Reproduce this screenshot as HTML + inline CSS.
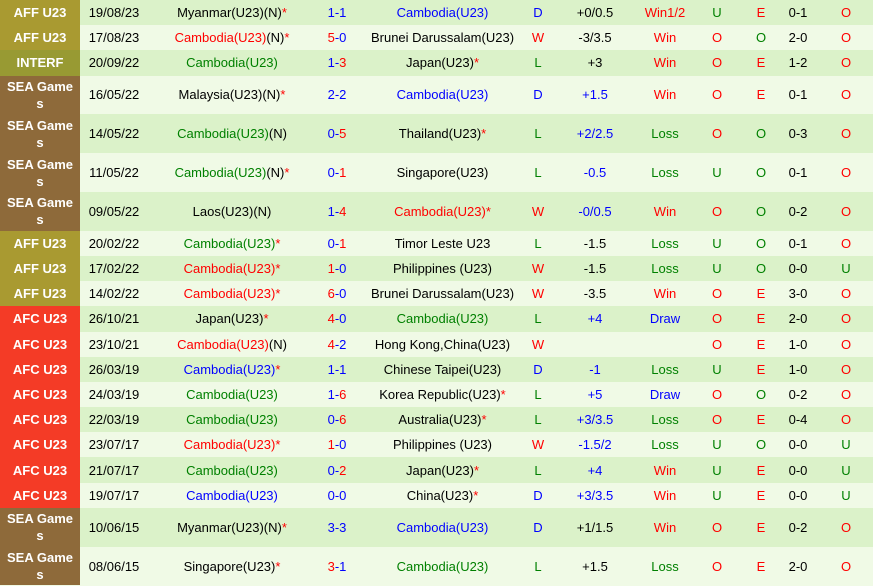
<!DOCTYPE html>
<html><head><meta charset="utf-8"><style>
*{margin:0;padding:0;box-sizing:border-box}
body{width:873px;height:586px;overflow:hidden;background:#f0fae6;font-family:"Liberation Sans",Arial,sans-serif;font-size:13px;color:#000}
.r{display:flex;height:25.2px;align-items:center}
.r.t{height:38.8px}
.r:nth-child(odd){background:#dbf2c9}
.r:nth-child(even){background:#f0fae6}
.r>div{text-align:center;white-space:nowrap;overflow:visible}
.l{width:80px;height:100%;display:flex;align-items:center;justify-content:center;color:#fff;font-weight:bold;line-height:17px;text-align:center}
.aff{background:#a99a31}.int{background:#989a33}.sea{background:#8e6a3a}.afc{background:#f43b26}
.c1{width:68px}.c2{width:168px}.c3{width:42px}.c4{width:169px}.c5{width:22px}.c6{width:92px}.c7{width:48px}.c8{width:56px}.c9{width:32px}.c10{width:42px}.c11{width:54px}
.R{color:#f00}.G{color:#008000}.B{color:#00f}
</style></head><body>
<div class="r"><div class="l aff">AFF U23</div><div class="c1">19/08/23</div><div class="c2">Myanmar(U23)(N)<span class="R">*</span></div><div class="c3 B">1-1</div><div class="c4 B">Cambodia(U23)</div><div class="c5 B">D</div><div class="c6">+0/0.5</div><div class="c7 R">Win1/2</div><div class="c8 G">U</div><div class="c9 R">E</div><div class="c10">0-1</div><div class="c11 R">O</div></div>
<div class="r"><div class="l aff">AFF U23</div><div class="c1">17/08/23</div><div class="c2"><span class="R">Cambodia(U23)</span>(N)<span class="R">*</span></div><div class="c3"><span class="R">5</span><span class="B">-0</span></div><div class="c4">Brunei Darussalam(U23)</div><div class="c5 R">W</div><div class="c6">-3/3.5</div><div class="c7 R">Win</div><div class="c8 R">O</div><div class="c9 G">O</div><div class="c10">2-0</div><div class="c11 R">O</div></div>
<div class="r"><div class="l int">INTERF</div><div class="c1">20/09/22</div><div class="c2 G">Cambodia(U23)</div><div class="c3"><span class="B">1-</span><span class="R">3</span></div><div class="c4">Japan(U23)<span class="R">*</span></div><div class="c5 G">L</div><div class="c6">+3</div><div class="c7 R">Win</div><div class="c8 R">O</div><div class="c9 R">E</div><div class="c10">1-2</div><div class="c11 R">O</div></div>
<div class="r t"><div class="l sea">SEA Game<br>s</div><div class="c1">16/05/22</div><div class="c2">Malaysia(U23)(N)<span class="R">*</span></div><div class="c3 B">2-2</div><div class="c4 B">Cambodia(U23)</div><div class="c5 B">D</div><div class="c6 B">+1.5</div><div class="c7 R">Win</div><div class="c8 R">O</div><div class="c9 R">E</div><div class="c10">0-1</div><div class="c11 R">O</div></div>
<div class="r t"><div class="l sea">SEA Game<br>s</div><div class="c1">14/05/22</div><div class="c2"><span class="G">Cambodia(U23)</span>(N)</div><div class="c3"><span class="B">0-</span><span class="R">5</span></div><div class="c4">Thailand(U23)<span class="R">*</span></div><div class="c5 G">L</div><div class="c6 B">+2/2.5</div><div class="c7 G">Loss</div><div class="c8 R">O</div><div class="c9 G">O</div><div class="c10">0-3</div><div class="c11 R">O</div></div>
<div class="r t"><div class="l sea">SEA Game<br>s</div><div class="c1">11/05/22</div><div class="c2"><span class="G">Cambodia(U23)</span>(N)<span class="R">*</span></div><div class="c3"><span class="B">0-</span><span class="R">1</span></div><div class="c4">Singapore(U23)</div><div class="c5 G">L</div><div class="c6 B">-0.5</div><div class="c7 G">Loss</div><div class="c8 G">U</div><div class="c9 G">O</div><div class="c10">0-1</div><div class="c11 R">O</div></div>
<div class="r t"><div class="l sea">SEA Game<br>s</div><div class="c1">09/05/22</div><div class="c2">Laos(U23)(N)</div><div class="c3"><span class="B">1-</span><span class="R">4</span></div><div class="c4 R">Cambodia(U23)*</div><div class="c5 R">W</div><div class="c6 B">-0/0.5</div><div class="c7 R">Win</div><div class="c8 R">O</div><div class="c9 G">O</div><div class="c10">0-2</div><div class="c11 R">O</div></div>
<div class="r"><div class="l aff">AFF U23</div><div class="c1">20/02/22</div><div class="c2"><span class="G">Cambodia(U23)</span><span class="R">*</span></div><div class="c3"><span class="B">0-</span><span class="R">1</span></div><div class="c4">Timor Leste U23</div><div class="c5 G">L</div><div class="c6">-1.5</div><div class="c7 G">Loss</div><div class="c8 G">U</div><div class="c9 G">O</div><div class="c10">0-1</div><div class="c11 R">O</div></div>
<div class="r"><div class="l aff">AFF U23</div><div class="c1">17/02/22</div><div class="c2 R">Cambodia(U23)*</div><div class="c3"><span class="R">1</span><span class="B">-0</span></div><div class="c4">Philippines (U23)</div><div class="c5 R">W</div><div class="c6">-1.5</div><div class="c7 G">Loss</div><div class="c8 G">U</div><div class="c9 G">O</div><div class="c10">0-0</div><div class="c11 G">U</div></div>
<div class="r"><div class="l aff">AFF U23</div><div class="c1">14/02/22</div><div class="c2 R">Cambodia(U23)*</div><div class="c3"><span class="R">6</span><span class="B">-0</span></div><div class="c4">Brunei Darussalam(U23)</div><div class="c5 R">W</div><div class="c6">-3.5</div><div class="c7 R">Win</div><div class="c8 R">O</div><div class="c9 R">E</div><div class="c10">3-0</div><div class="c11 R">O</div></div>
<div class="r"><div class="l afc">AFC U23</div><div class="c1">26/10/21</div><div class="c2">Japan(U23)<span class="R">*</span></div><div class="c3"><span class="R">4</span><span class="B">-0</span></div><div class="c4 G">Cambodia(U23)</div><div class="c5 G">L</div><div class="c6 B">+4</div><div class="c7 B">Draw</div><div class="c8 R">O</div><div class="c9 R">E</div><div class="c10">2-0</div><div class="c11 R">O</div></div>
<div class="r"><div class="l afc">AFC U23</div><div class="c1">23/10/21</div><div class="c2"><span class="R">Cambodia(U23)</span>(N)</div><div class="c3"><span class="R">4</span><span class="B">-2</span></div><div class="c4">Hong Kong,China(U23)</div><div class="c5 R">W</div><div class="c6"></div><div class="c7"></div><div class="c8 R">O</div><div class="c9 R">E</div><div class="c10">1-0</div><div class="c11 R">O</div></div>
<div class="r"><div class="l afc">AFC U23</div><div class="c1">26/03/19</div><div class="c2"><span class="B">Cambodia(U23)</span><span class="R">*</span></div><div class="c3 B">1-1</div><div class="c4">Chinese Taipei(U23)</div><div class="c5 B">D</div><div class="c6 B">-1</div><div class="c7 G">Loss</div><div class="c8 G">U</div><div class="c9 R">E</div><div class="c10">1-0</div><div class="c11 R">O</div></div>
<div class="r"><div class="l afc">AFC U23</div><div class="c1">24/03/19</div><div class="c2 G">Cambodia(U23)</div><div class="c3"><span class="B">1-</span><span class="R">6</span></div><div class="c4">Korea Republic(U23)<span class="R">*</span></div><div class="c5 G">L</div><div class="c6 B">+5</div><div class="c7 B">Draw</div><div class="c8 R">O</div><div class="c9 G">O</div><div class="c10">0-2</div><div class="c11 R">O</div></div>
<div class="r"><div class="l afc">AFC U23</div><div class="c1">22/03/19</div><div class="c2 G">Cambodia(U23)</div><div class="c3"><span class="B">0-</span><span class="R">6</span></div><div class="c4">Australia(U23)<span class="R">*</span></div><div class="c5 G">L</div><div class="c6 B">+3/3.5</div><div class="c7 G">Loss</div><div class="c8 R">O</div><div class="c9 R">E</div><div class="c10">0-4</div><div class="c11 R">O</div></div>
<div class="r"><div class="l afc">AFC U23</div><div class="c1">23/07/17</div><div class="c2 R">Cambodia(U23)*</div><div class="c3"><span class="R">1</span><span class="B">-0</span></div><div class="c4">Philippines (U23)</div><div class="c5 R">W</div><div class="c6 B">-1.5/2</div><div class="c7 G">Loss</div><div class="c8 G">U</div><div class="c9 G">O</div><div class="c10">0-0</div><div class="c11 G">U</div></div>
<div class="r"><div class="l afc">AFC U23</div><div class="c1">21/07/17</div><div class="c2 G">Cambodia(U23)</div><div class="c3"><span class="B">0-</span><span class="R">2</span></div><div class="c4">Japan(U23)<span class="R">*</span></div><div class="c5 G">L</div><div class="c6 B">+4</div><div class="c7 R">Win</div><div class="c8 G">U</div><div class="c9 R">E</div><div class="c10">0-0</div><div class="c11 G">U</div></div>
<div class="r"><div class="l afc">AFC U23</div><div class="c1">19/07/17</div><div class="c2 B">Cambodia(U23)</div><div class="c3 B">0-0</div><div class="c4">China(U23)<span class="R">*</span></div><div class="c5 B">D</div><div class="c6 B">+3/3.5</div><div class="c7 R">Win</div><div class="c8 G">U</div><div class="c9 R">E</div><div class="c10">0-0</div><div class="c11 G">U</div></div>
<div class="r t"><div class="l sea">SEA Game<br>s</div><div class="c1">10/06/15</div><div class="c2">Myanmar(U23)(N)<span class="R">*</span></div><div class="c3 B">3-3</div><div class="c4 B">Cambodia(U23)</div><div class="c5 B">D</div><div class="c6">+1/1.5</div><div class="c7 R">Win</div><div class="c8 R">O</div><div class="c9 R">E</div><div class="c10">0-2</div><div class="c11 R">O</div></div>
<div class="r t"><div class="l sea">SEA Game<br>s</div><div class="c1">08/06/15</div><div class="c2">Singapore(U23)<span class="R">*</span></div><div class="c3"><span class="R">3</span><span class="B">-1</span></div><div class="c4 G">Cambodia(U23)</div><div class="c5 G">L</div><div class="c6">+1.5</div><div class="c7 G">Loss</div><div class="c8 R">O</div><div class="c9 R">E</div><div class="c10">2-0</div><div class="c11 R">O</div></div>
</body></html>
